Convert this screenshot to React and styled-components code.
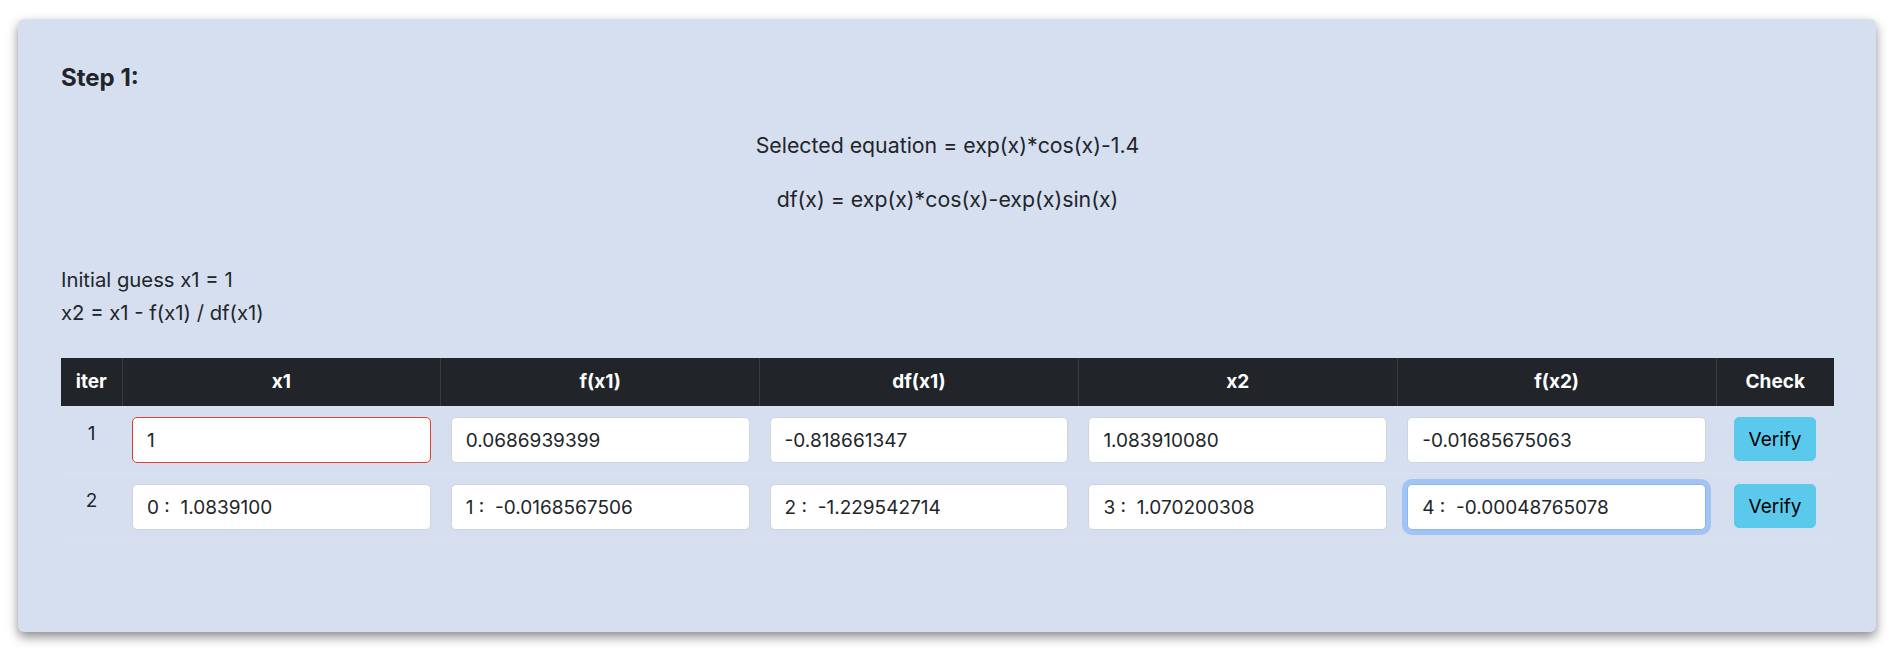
import React from 'react';
import styled, { createGlobalStyle } from 'styled-components';

const GlobalStyle = createGlobalStyle`
    html, body {
        margin: 0;
        background: #ffffff;
    }
    body {
        font-family: Inter, "Noto Sans", "Liberation Sans", sans-serif;
        color: #212529;
    }
`;

const Page = styled.div`
    padding: 19px 16px 21px 18px;
`;

const Card = styled.section`
    box-sizing: border-box;
    background-color: #d6dff0;
    border-radius: 6px;
    box-shadow: 0 5px 11px rgba(0, 0, 0, 0.45);
    padding: 44px 42px 91px 43px;
`;

const StepTitle = styled.h5`
    margin: 0;
    font-size: 24px;
    font-weight: 700;
    line-height: 29px;
`;

const Equations = styled.div`
    display: flex;
    flex-direction: column;
    gap: 21px;
    margin-top: 37px;
    text-align: center;
`;

const Equation = styled.p`
    margin: 0;
    font-size: 21.3px;
    line-height: 33px;
`;

const Guess = styled.div`
    margin-top: 47px;
    font-size: 20.3px;
    line-height: 33px;
`;

const Table = styled.table`
    width: 100%;
    margin-top: 29px;
    border-collapse: collapse;
    table-layout: fixed;
`;

const HeadCell = styled.th`
    padding: 10px;
    background-color: #212529;
    color: #ffffff;
    font-size: 19px;
    font-weight: 700;
    line-height: 28px;
    text-align: center;
    border-left: 1px solid #373b3e;
    border-bottom: 1px solid #dee2e6;

    &:first-child {
        border-left: none;
    }
`;

const Row = styled.tr`
    border-bottom: 1px solid #dee2e6;
`;

const Cell = styled.td`
    padding: 10px;
    vertical-align: top;
    text-align: ${props => (props.$center ? 'center' : 'left')};
    font-size: 19px;
    line-height: 28px;
`;

const IterCell = styled(Cell)`
    padding-top: 13px;
`;

const Field = styled.input`
    box-sizing: border-box;
    display: block;
    width: 100%;
    height: 46px;
    padding: 0 14px;
    font-family: inherit;
    font-size: 19px;
    color: #212529;
    background-color: #ffffff;
    border: 1px solid ${props =>
        props.$state === 'invalid' ? '#e23b30' : props.$state === 'focus' ? '#86b7fe' : '#ced4da'};
    border-radius: 5px;
    box-shadow: ${props => (props.$state === 'focus' ? '0 0 0 5px rgba(13, 110, 253, 0.25)' : 'none')};
    outline: none;
`;

const VerifyButton = styled.button`
    box-sizing: border-box;
    height: 44px;
    padding: 0 14px;
    font-family: inherit;
    font-size: 19px;
    color: #000000;
    background-color: #5bc9ec;
    border: 1px solid #5bc9ec;
    border-radius: 5px;
    cursor: pointer;
`;

const columns = ['iter', 'x1', 'f(x1)', 'df(x1)', 'x2', 'f(x2)', 'Check'];

const rows = [
    {
        iter: 1,
        values: ['1', '0.0686939399', '-0.818661347', '1.083910080', '-0.01685675063'],
        states: ['invalid', null, null, null, null],
    },
    {
        iter: 2,
        values: ['0 :  1.0839100', '1 :  -0.0168567506', '2 :  -1.229542714', '3 :  1.070200308', '4 :  -0.00048765078'],
        states: [null, null, null, null, 'focus'],
    },
];

function App() {
    return (
        <Page>
            <GlobalStyle />
            <Card>
                <StepTitle>Step 1:</StepTitle>
                <Equations>
                    <Equation>Selected equation = exp(x)*cos(x)-1.4</Equation>
                    <Equation>df(x) = exp(x)*cos(x)-exp(x)sin(x)</Equation>
                </Equations>
                <Guess>
                    <div>Initial guess x1 = 1</div>
                    <div>x2 = x1 - f(x1) / df(x1)</div>
                </Guess>
                <Table>
                    <colgroup>
                        <col style={{ width: 61 }} />
                        <col />
                        <col />
                        <col />
                        <col />
                        <col />
                        <col style={{ width: 118 }} />
                    </colgroup>
                    <thead>
                        <tr>
                            {columns.map(c => <HeadCell key={c}>{c}</HeadCell>)}
                        </tr>
                    </thead>
                    <tbody>
                        {rows.map(row => (
                            <Row key={row.iter}>
                                <IterCell $center>{row.iter}</IterCell>
                                {row.values.map((v, i) => (
                                    <Cell key={i}>
                                        <Field readOnly value={v} $state={row.states[i]} />
                                    </Cell>
                                ))}
                                <Cell $center>
                                    <VerifyButton>Verify</VerifyButton>
                                </Cell>
                            </Row>
                        ))}
                    </tbody>
                </Table>
            </Card>
        </Page>
    );
}

export default App;
